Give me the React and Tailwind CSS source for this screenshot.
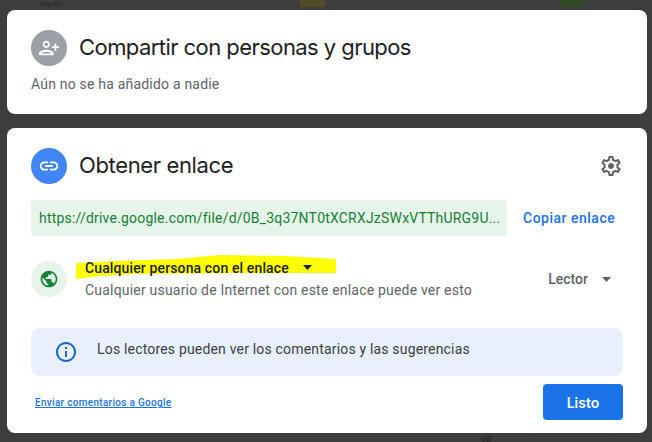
import React from "react";

const font = "font-['Roboto',sans-serif]";
const titleFont = "font-['Inter',sans-serif]";

const Caret = ({ className }) => (
  <svg width="9" height="5" viewBox="0 0 9 5" className={className}>
    <path d="M0 0h9L4.5 5z" fill="currentColor" />
  </svg>
);

const Icon = ({ size = 24, d, className }) => (
  <svg width={size} height={size} viewBox="0 0 24 24" fill="currentColor" className={className}>
    <path d={d} />
  </svg>
);

const personAdd = "M15 12c2.21 0 4-1.79 4-4s-1.79-4-4-4-4 1.79-4 4 1.79 4 4 4zm0-6c1.1 0 2 .9 2 2s-.9 2-2 2-2-.9-2-2 .9-2 2-2zm0 8c-2.67 0-8 1.34-8 4v2h16v-2c0-2.66-5.33-4-8-4zm-6 4c.22-.63 3.13-2 6-2 2.89 0 5.8 1.43 6 2H9zM6 15v-3h3v-2H6V7H4v3H1v2h3v3h2z";
const link = "M3.9 12c0-1.71 1.39-3.1 3.1-3.1h4V7H7c-2.76 0-5 2.24-5 5s2.24 5 5 5h4v-1.9H7c-1.71 0-3.1-1.39-3.1-3.1zM8 13h8v-2H8v2zm9-6h-4v1.9h4c1.71 0 3.1 1.39 3.1 3.1s-1.39 3.1-3.1 3.1h-4V17h4c2.76 0 5-2.24 5-5s-2.24-5-5-5z";
const gear = "M19.43 12.98c.04-.32.07-.64.07-.98 0-.34-.03-.66-.07-.98l2.11-1.65c.19-.15.24-.42.12-.64l-2-3.46c-.09-.16-.26-.25-.44-.25-.06 0-.12.01-.17.03l-2.49 1c-.52-.4-1.08-.73-1.69-.98l-.38-2.65C14.46 2.18 14.25 2 14 2h-4c-.25 0-.46.18-.49.42l-.38 2.65c-.61.25-1.17.59-1.69.98l-2.49-1c-.06-.02-.12-.03-.18-.03-.17 0-.34.09-.43.25l-2 3.46c-.13.22-.07.49.12.64l2.11 1.65c-.04.32-.07.65-.07.98 0 .33.03.66.07.98l-2.11 1.65c-.19.15-.24.42-.12.64l2 3.46c.09.16.26.25.44.25.06 0 .12-.01.17-.03l2.49-1c.52.4 1.08.73 1.69.98l.38 2.65c.03.24.24.42.49.42h4c.25 0 .46-.18.49-.42l.38-2.65c.61-.25 1.17-.59 1.69-.98l2.49 1c.06.02.12.03.18.03.17 0 .34-.09.43-.25l2-3.46c.12-.22.07-.49-.12-.64l-2.11-1.65zm-1.98-1.71c.04.31.05.52.05.73 0 .21-.02.43-.05.73l-.14 1.13.89.7 1.08.84-.7 1.21-1.27-.51-1.04-.42-.9.68c-.43.32-.84.56-1.25.73l-1.06.43-.16 1.13-.2 1.35h-1.4l-.19-1.35-.16-1.13-1.06-.43c-.43-.18-.83-.41-1.23-.71l-.91-.7-1.06.43-1.27.51-.7-1.21 1.08-.84.89-.7-.14-1.13c-.03-.31-.05-.54-.05-.74s.02-.43.05-.73l.14-1.13-.89-.7-1.08-.84.7-1.21 1.27.51 1.04.42.9-.68c.43-.32.84-.56 1.25-.73l1.06-.43.16-1.13.2-1.35h1.39l.19 1.35.16 1.13 1.06.43c.43.18.83.41 1.23.71l.91.7 1.06-.43 1.27-.51.7 1.21-1.07.85-.89.7.14 1.13zM12 9c-1.66 0-3 1.34-3 3s1.34 3 3 3 3-1.34 3-3-1.34-3-3-3z";
const info = "M11 7h2v2h-2zm0 4h2v6h-2zm1-9C6.48 2 2 6.48 2 12s4.48 10 10 10 10-4.48 10-10S17.52 2 12 2zm0 18c-4.41 0-8-3.59-8-8s3.59-8 8-8 8 3.59 8 8-3.59 8-8 8z";
const globe = "M12 2C6.48 2 2 6.48 2 12s4.48 10 10 10 10-4.48 10-10S17.52 2 12 2zm-1 17.93c-3.95-.49-7-3.85-7-7.93 0-.62.08-1.21.21-1.79L9 15v1c0 1.1.9 2 2 2v1.93zm6.9-2.54c-.26-.81-1-1.39-1.9-1.39h-1v-3c0-.55-.45-1-1-1H8v-2h2c.55 0 1-.45 1-1V7h2c1.1 0 2-.9 2-2v-.41c2.93 1.19 5 4.06 5 7.41 0 2.08-.8 3.97-2.1 5.39z";

export default function App() {
  return (
    <div className={`relative w-[652px] h-[442px] overflow-hidden bg-[#3d3d3d] pl-[7px] pr-[5px] pt-[10px] ${font}`}>
      {/* dimmed spreadsheet behind the dialog */}
      <div className="absolute left-[300px] top-0 w-[25px] h-[7px] bg-[#544c25]" />
      <div className="absolute left-[559px] top-0 w-[25px] h-[7px] bg-[#2f4a22]" />
      <div className="absolute left-[41px] top-0 text-[5px] leading-[9px] text-[#222]">Hugo B.C</div>
      <div className="absolute left-[481px] top-[434px] text-[10px] leading-[9px] text-[#222]">yo</div>

      <div className="relative bg-white rounded-[8px] h-[104px] pl-[24px] pt-[20px]">
        <div className="flex items-center gap-[12px]">
          <div className="w-[36px] h-[36px] rounded-full bg-[#9aa0a6] flex items-center justify-center text-white">
            <Icon size={22} d={personAdd} className="-scale-x-100" />
          </div>
          <div className={`text-[22px] leading-[36px] text-[#202124] -mt-[2px] tracking-[-0.56px] ${titleFont}`}>Compartir con personas y grupos</div>
        </div>
        <div className="mt-[8px] text-[14px] leading-[20px] tracking-[0.2px] text-[#5f6368]">Aún no se ha añadido a nadie</div>
      </div>

      <div className="relative mt-[14px] bg-white rounded-[8px] h-[305px] px-[24px] pt-[20px]">
        <div className="flex items-center gap-[12px]">
          <div className="w-[36px] h-[36px] rounded-full bg-[#4285f4] flex items-center justify-center text-white">
            <Icon size={22} d={link} />
          </div>
          <div className={`flex-1 text-[22px] leading-[36px] text-[#202124] -mt-[2px] tracking-[-0.36px] ${titleFont}`}>Obtener enlace</div>
          <Icon size={24} d={gear} className="text-[#5f6368]" />
        </div>

        <div className="mt-[16px] flex items-center">
          <div className="w-[476px] h-[36px] px-[8px] rounded-[4px] bg-[#e6f4ea] text-[#188038] text-[14px] leading-[36px] whitespace-nowrap tracking-[0.2px]">
            https://drive.google.com/file/d/0B_3q37NT0tXCRXJzSWxVTThURG9U...
          </div>
          <div className="ml-[16px] text-[14px] font-medium tracking-[0.5px] text-[#1a73e8]">Copiar enlace</div>
        </div>

        <div className="mt-[25px] h-[36px] flex items-center">
          <div className="w-[36px] h-[36px] rounded-full bg-[#e6f4ea] flex items-center justify-center text-[#188038]">
            <Icon size={20} d={globe} />
          </div>
          <div className="relative ml-[18px] flex-1 -mt-[1px]">
            <svg width="261" height="26" viewBox="0 0 261 26" className="absolute left-[-9px] top-[-4px]">
              <path d="M0 9 L40 7 L100 5 L145 1 L210 2 L260 5 L260 19 L150 19 L60 20 L25 22 L0 25 Z" fill="#ffff00" />
            </svg>
            <div className="relative flex items-center text-[14px] leading-[20px] font-medium tracking-[0.13px] text-[#202124]">
              Cualquier persona con el enlace
              <Caret className="ml-[14px] text-[#202124]" />
            </div>
            <div className="relative mt-[2px] text-[14px] leading-[20px] tracking-[0.2px] text-[#5f6368]">
              Cualquier usuario de Internet con este enlace puede ver esto
            </div>
          </div>
          <div className="flex items-center text-[14px] font-medium text-[#5f6368] mr-[12px]">
            Lector
            <Caret className="ml-[14px] text-[#5f6368]" />
          </div>
        </div>

        <div className="mt-[31px] h-[48px] rounded-[8px] bg-[#e8f0fe] flex items-center pl-[23px]">
          <Icon size={24} d={info} className="text-[#1967d2]" />
          <div className="ml-[19px] text-[14px] tracking-[0.18px] text-[#3c4043] -mt-[6px]">Los lectores pueden ver los comentarios y las sugerencias</div>
        </div>

        <div className="mt-[8px] flex items-center justify-between">
          <a className="ml-[4px] mt-[1px] text-[10px] font-medium underline text-[#1a73e8] tracking-[0.3px]">Enviar comentarios a Google</a>
          <div className={`w-[80px] h-[36px] rounded-[4px] bg-[#1a73e8] text-white text-[14px] font-semibold flex items-center justify-center ${titleFont}`}>Listo</div>
        </div>
      </div>
    </div>
  );
}
